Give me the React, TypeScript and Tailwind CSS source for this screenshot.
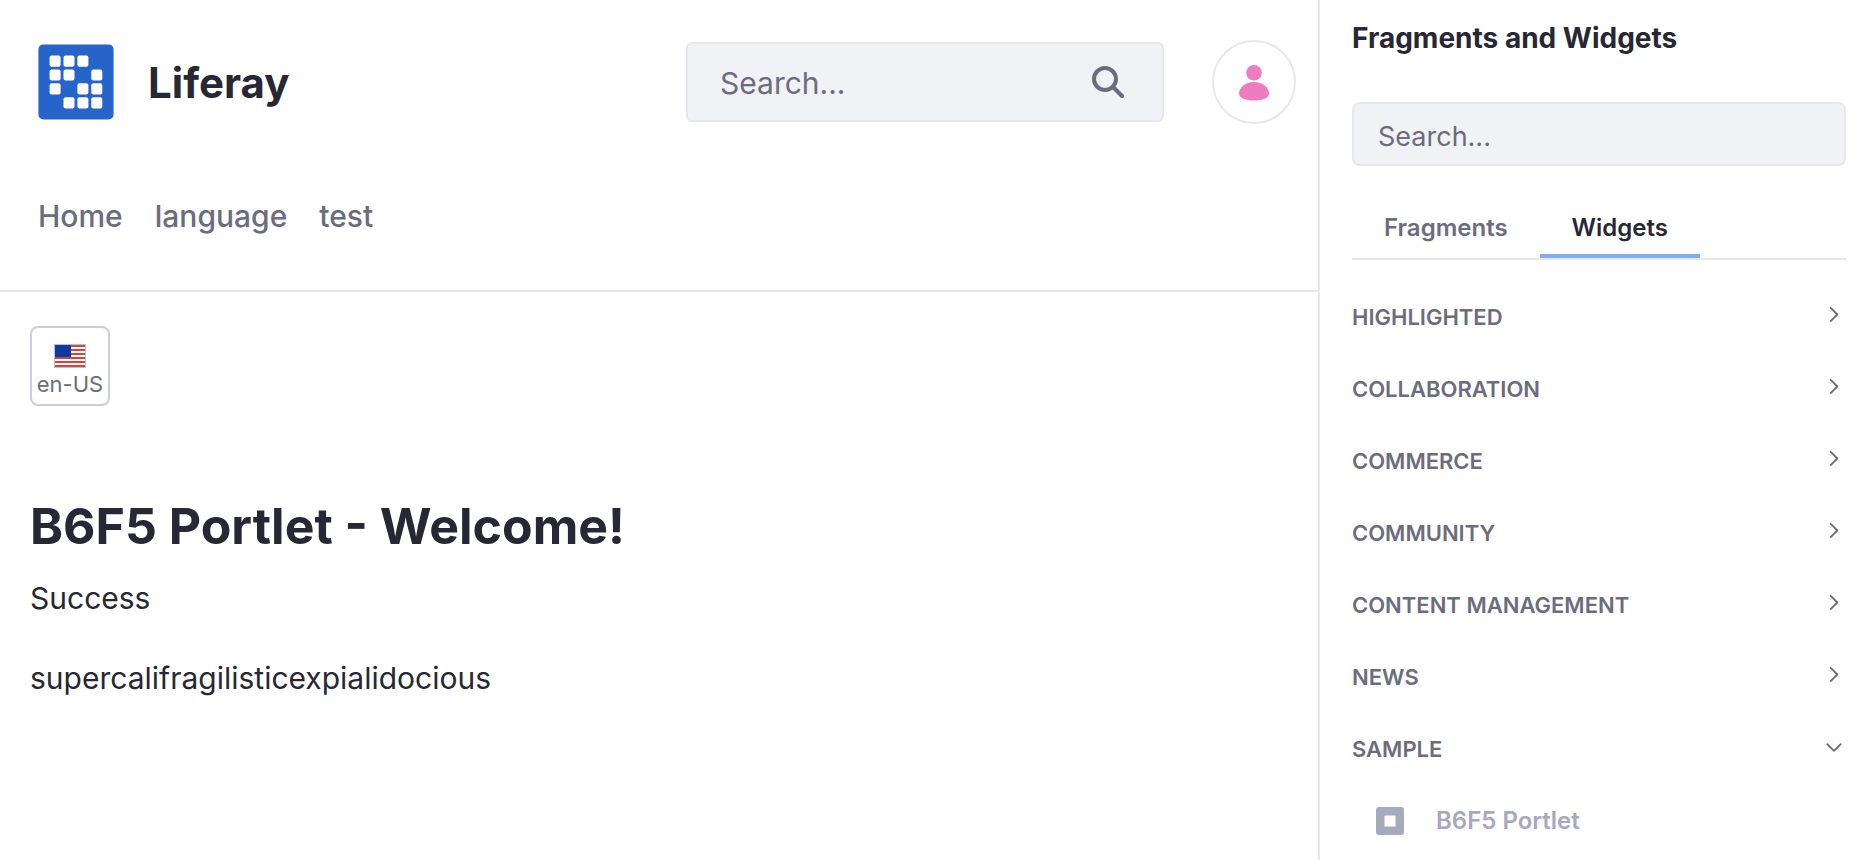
const CATEGORIES = [
  { name: "Highlighted", open: false },
  { name: "Collaboration", open: false },
  { name: "Commerce", open: false },
  { name: "Community", open: false },
  { name: "Content Management", open: false },
  { name: "News", open: false },
  { name: "Sample", open: true },
];

const LOGO_CELLS = [
  [0, 0], [1, 0], [2, 0],
  [0, 1], [1, 1], [3, 1],
  [0, 2], [2, 2], [3, 2],
  [1, 3], [2, 3], [3, 3],
];

function Logo() {
  return (
    <svg viewBox="0 0 76 76" className="size-19 shrink-0" aria-hidden="true">
      <rect x="0.4" y="0.4" width="75.2" height="75" rx="5" fill="#2764c9" />
      {LOGO_CELLS.map(([col, row]) => (
        <rect
          key={`${col}-${row}`}
          x={11.6 + col * 13.9}
          y={11.5 + row * 13.9}
          width="11"
          height="11.2"
          rx="2"
          fill="#fff"
        />
      ))}
    </svg>
  );
}

function SearchIcon() {
  return (
    <svg viewBox="0 0 32 32" className="size-8" fill="none" stroke="#6b6c7e" aria-hidden="true">
      <circle cx="13" cy="13" r="11" strokeWidth="4" />
      <path d="M21 21L30 30" strokeWidth="4" strokeLinecap="round" />
    </svg>
  );
}

function UserIcon() {
  return (
    <svg viewBox="0 0 32 38" className="h-[38px] w-8" fill="#ee7cbe" aria-hidden="true">
      <circle cx="16" cy="9.8" r="7.8" />
      <path d="M1 30.5C1 24.5 7.5 19 16 19s15 5.500 15 11.500C31 35 24.500 37.500 16 37.500S1 35 1 30.500z" />
    </svg>
  );
}

function Flag() {
  return (
    <svg viewBox="0 0 32 24" className="h-6 w-8" shapeRendering="crispEdges" aria-hidden="true">
      <rect width="32" height="24" fill="#b5c2d2" />
      <rect x="1" y="1" width="30" height="22" fill="#fff" />
      {[1, 5, 9, 13, 17, 21].map((y) => (
        <rect key={y} x="1" y={y} width="30" height="2" fill="#d8423a" />
      ))}
      <rect x="1" y="1" width="16" height="12" fill="#0f3a9d" />
    </svg>
  );
}

function Chevron({ open }: { open: boolean }) {
  return (
    <svg
      viewBox="0 0 24 24"
      className="size-6"
      fill="none"
      stroke="#6b6c7e"
      strokeWidth="1.8"
      strokeLinecap="round"
      strokeLinejoin="round"
      aria-hidden="true"
    >
      <path d={open ? "M5.300 7.200L12 13.800L18.700 7.200" : "M8.700 2.800L15.300 9.500L8.700 16.200"} />
    </svg>
  );
}

function Header() {
  return (
    <header className="flex flex-col border-b-2 border-[#e7e7ed] pt-10 pr-[22px] pb-[50px] pl-[38px]">
      <div className="flex items-center justify-between gap-8">
        <a href="#home" className="flex items-center gap-[34px]">
          <Logo />
          <span className="pt-0.5 text-[42px] leading-[52px] font-bold text-[#272833]">Liferay</span>
        </a>
        <div className="flex items-center gap-12">
          <form className="flex h-20 w-[478px] items-center rounded-md border-2 border-[#e7e7ed] bg-[#f1f2f5] pr-[38px] pl-8">
            <input
              type="text"
              aria-label="Search the site"
              placeholder="Search..."
              className="min-w-0 flex-1 bg-transparent pt-0.5 text-[30px] leading-10 text-[#272833] outline-none placeholder:text-[#6b6c7e]"
            />
            <button type="button" aria-label="Search">
              <SearchIcon />
            </button>
          </form>
          <button
            type="button"
            aria-label="User profile"
            className="flex size-21 items-center justify-center rounded-full border-2 border-[#e7e7ed] bg-white"
          >
            <UserIcon />
          </button>
        </div>
      </div>
      <nav className="mt-17 flex gap-8 text-[30px] leading-12 font-medium text-[#6b6c7e]">
        <a href="#home">Home</a>
        <a href="#language">language</a>
        <a href="#test">test</a>
      </nav>
    </header>
  );
}

function Sidebar() {
  return (
    <aside className="w-[558px] shrink-0 border-l-2 border-[#e7e7ed] pt-4 pr-[30px] pl-8">
      <h2 className="text-[28px] leading-11 font-bold text-[#272833]">Fragments and Widgets</h2>
      <input
        type="text"
        aria-label="Search fragments and widgets"
        placeholder="Search..."
        className="mt-[42px] block h-16 w-full rounded-lg border-2 border-[#e7e7ed] bg-[#f1f2f5] px-6 pt-1 text-[27px] text-[#272833] outline-none placeholder:text-[#6b6c7e]"
      />
      <div role="tablist" className="mt-7 flex h-[66px] border-b-2 border-[#e7e7ed] text-2xl leading-8 font-semibold">
        <button type="button" role="tab" aria-selected="false" className="border-b-4 border-transparent px-8 pt-2 text-[#6b6c7e]">
          Fragments
        </button>
        <button type="button" role="tab" aria-selected="true" className="border-b-4 border-[#80acff] px-8 pt-2 text-[#272833]">
          Widgets
        </button>
      </div>
      <ul className="mt-[21px]">
        {CATEGORIES.map((category) => (
          <li key={category.name}>
            <button
              type="button"
              aria-expanded={category.open}
              className="flex h-18 w-full items-center justify-between text-[22px] leading-8 font-semibold text-[#6b6c7e] uppercase"
            >
              {category.name}
              <Chevron open={category.open} />
            </button>
            {category.open && (
              <div className="flex h-18 items-center gap-8 pl-6 text-2xl leading-8 font-semibold text-[#a7a9bc]">
                <svg viewBox="0 0 28 28" className="size-7" aria-hidden="true">
                  <path
                    fill="#a7a9bc"
                    fillRule="evenodd"
                    d="M3 0h22a3 3 0 0 1 3 3v22a3 3 0 0 1-3 3H3a3 3 0 0 1-3-3V3a3 3 0 0 1 3-3zM8.500 8.500v11h11v-11z"
                  />
                </svg>
                B6F5 Portlet
              </div>
            )}
          </li>
        ))}
      </ul>
    </aside>
  );
}

export default function App() {
  return (
    <div className="flex min-h-screen bg-white font-['Inter',sans-serif] text-[#272833]">
      <div className="min-w-0 flex-1">
        <Header />
        <main className="px-[30px] pt-[34px]">
          <button
            type="button"
            className="flex size-20 flex-col items-center rounded-lg border-2 border-[#cdced9] pt-4 text-[22px] leading-8 text-[#6b6c7e]"
          >
            <Flag />
            <span className="whitespace-nowrap">en-US</span>
          </button>
          <h1 className="mt-[88px] text-[50px] leading-16 font-bold">B6F5 Portlet - Welcome!</h1>
          <p className="mt-4 text-[30px] leading-12">Success</p>
          <p className="mt-8 text-[30px] leading-12">supercalifragilisticexpialidocious</p>
        </main>
      </div>
      <Sidebar />
    </div>
  );
}
